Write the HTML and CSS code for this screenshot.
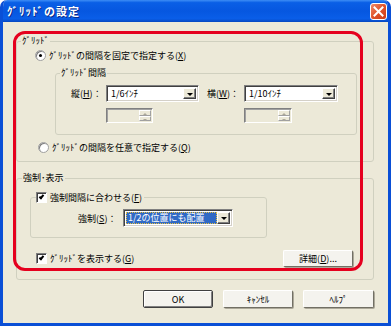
FILE: index.html
```html
<!DOCTYPE html>
<html lang="ja">
<head>
  <meta charset="UTF-8">
  <title>ｸﾞﾘｯﾄﾞの設定</title>
  <link rel="stylesheet" href="styles.css">
</head>
<body>
  <div class="window">
    <div class="titlebar">
      <span class="title">ｸﾞﾘｯﾄﾞの設定</span>
      <span class="close">
        <svg width="11" height="11" viewBox="0 0 11 11"><path d="M1.5 1.5 L9.5 9.5 M9.5 1.5 L1.5 9.5" stroke="#fff" stroke-width="2" stroke-linecap="square"/></svg>
      </span>
    </div>

    <div class="content">
      <fieldset class="group grid-group">
        <legend>ｸﾞﾘｯﾄﾞ</legend>
        <div class="option first">
          <span class="radio checked"></span>
          <span>ｸﾞﾘｯﾄﾞの間隔を固定で指定する(<u>X</u>)</span>
        </div>

        <fieldset class="group spacing">
          <legend>ｸﾞﾘｯﾄﾞ間隔</legend>
          <div class="row">
            <span class="field-label v">縦(<u>H</u>)：</span>
            <span class="combo w93"><span class="combo-text">1/6ｲﾝﾁ</span><span class="arrow"></span></span>
            <span class="field-label h">横(<u>W</u>)：</span>
            <span class="combo w94"><span class="combo-text">1/10ｲﾝﾁ</span><span class="arrow"></span></span>
          </div>
          <div class="row spins">
            <span class="spin"><span class="spin-btns"><span class="up"></span><span class="down"></span></span></span>
            <span class="spin second"><span class="spin-btns"><span class="up"></span><span class="down"></span></span></span>
          </div>
        </fieldset>

        <div class="option last">
          <span class="radio"></span>
          <span>ｸﾞﾘｯﾄﾞの間隔を任意で指定する(<u>Q</u>)</span>
        </div>
      </fieldset>

      <fieldset class="group force-group">
        <legend>強制･表示</legend>
        <fieldset class="group snap">
          <legend><span class="check on"></span><span>強制間隔に合わせる(<u>F</u>)</span></legend>
          <div class="row">
            <span class="field-label force">強制(<u>S</u>)：</span>
            <span class="combo w110 focused"><span class="combo-text"><span class="selected">1/2の位置にも配置</span></span><span class="arrow"></span></span>
          </div>
        </fieldset>
        <div class="show-row">
          <div class="option">
            <span class="check on"></span>
            <span>ｸﾞﾘｯﾄﾞを表示する(<u>G</u>)</span>
          </div>
          <button class="btn detail">詳細(<u>D</u>)...</button>
        </div>
      </fieldset>

      <div class="buttons">
        <button class="btn default">OK</button>
        <button class="btn">ｷｬﾝｾﾙ</button>
        <button class="btn">ﾍﾙﾌﾟ</button>
      </div>
    </div>

    <div class="mark"></div>
  </div>
</body>
</html>
```

FILE: styles.css
```css
*, *::before, *::after { box-sizing: border-box; }
html, body {
  margin: 0; padding: 0;
  background: #fff;
}
.window {
  position: relative;
  width: 391px;
  height: 326px;
  background: #ece9d8;
  border: 3px solid #0a4fd6;
  border-top: none;
  border-radius: 7px 7px 0 0;
  font-family: "Noto Sans CJK JP", sans-serif;
  font-size: 9px;
  color: #000;
  overflow: hidden;
}
.titlebar {
  display: flex;
  align-items: center;
  justify-content: space-between;
  height: 22px;
  margin: 0 -3px;
  padding: 0 4px 0 7px;
  border-radius: 7px 7px 0 0;
  background: linear-gradient(to bottom, #3d8df5 0%, #0a5fe6 12%, #0657e0 50%, #0a5ee8 85%, #0547c0 100%);
}
.title {
  color: #fff;
  font-weight: bold;
  font-size: 11px;
  letter-spacing: 1px;
  text-shadow: 1px 1px 0 #0a2a8a;
}
.close {
  display: flex;
  align-items: center;
  justify-content: center;
  width: 17px;
  height: 17px;
  border: 1px solid #fff;
  border-radius: 3px;
  background: linear-gradient(135deg, #f08a6a 0%, #e0532b 50%, #c93c18 100%);
}
.content {
  padding: 13px 15px 0 13px;
}

/* group boxes */
.group {
  margin: 0;
  padding: 0;
  border: 1px solid #d0d0bf;
  border-radius: 3px;
  min-width: 0;
}
.group legend {
  padding: 0 1px;
  margin-left: 4px;
  line-height: 12px;
}
.grid-group {
  width: 358px;
  padding-bottom: 7px;
}
.option {
  display: flex;
  align-items: center;
  gap: 3px;
  height: 14px;
}
.option.first { margin: 1px 0 0 18px; }
.option.last { margin: 5px 0 0 21px; }
.spacing {
  width: 302px;
  margin: 5px 0 0 38px;
  padding-bottom: 11px;
}
.row {
  display: flex;
  align-items: center;
  margin-top: 6px;
}
.field-label.v { width: 50px; padding-left: 15px; }
.field-label.h { width: 45px; padding-left: 8px; }
.field-label.force { width: 92px; padding-left: 47px; }

/* combo boxes */
.combo {
  display: flex;
  align-items: center;
  height: 17px;
  background: #fff;
  border: 1px solid;
  border-color: #808080 #fff #fff #808080;
  box-shadow: inset 1px 1px 0 #404040, inset -1px -1px 0 #d4d0c8;
  padding: 2px;
}
.w93 { width: 93px; }
.w94 { width: 94px; }
.w110 { width: 110px; height: 18px; }
.combo-text {
  flex: 1;
  padding-left: 2px;
  line-height: 12px;
  white-space: nowrap;
  overflow: hidden;
}
.focused .combo-text { padding-left: 0; }
.selected {
  display: block;
  background: #316ac5;
  color: #fff;
  padding-left: 2px;
  outline: 1px dotted #e8c040;
  outline-offset: -1px;
}
.arrow {
  position: relative;
  width: 13px;
  height: 100%;
  background: #ece9d8;
  border: 1px solid;
  border-color: #fff #404040 #404040 #fff;
  box-shadow: inset -1px -1px 0 #808080;
}
.arrow::after {
  content: "";
  position: absolute;
  left: 3px;
  top: 4px;
  border-left: 3px solid transparent;
  border-right: 3px solid transparent;
  border-top: 3px solid #000;
}

/* disabled spin boxes */
.spin {
  display: flex;
  justify-content: flex-end;
  width: 47px;
  height: 15px;
  margin-left: 50px;
  background: #ece9d8;
  border: 1px solid;
  border-color: #808080 #fff #fff #808080;
  box-shadow: inset 1px 1px 0 #a0a0a0;
  padding: 1px;
}
.spin.second { margin-left: 91px; width: 48px; }
.spin-btns {
  display: flex;
  flex-direction: column;
  width: 12px;
}
.spin-btns span {
  position: relative;
  flex: 1;
  background: #ece9d8;
  border: 1px solid;
  border-color: #fff #a0a0a0 #a0a0a0 #fff;
}
.spin-btns span::after {
  content: "";
  position: absolute;
  left: 3px;
  top: 2px;
  border-left: 2px solid transparent;
  border-right: 2px solid transparent;
}
.spin-btns .up::after { border-bottom: 2px solid #aca899; }
.spin-btns .down::after { border-top: 2px solid #aca899; }

/* radio and check */
.radio {
  width: 11px;
  height: 11px;
  border-radius: 50%;
  background: #fff;
  border: 1px solid #a0a0a0;
  box-shadow: inset 1px 1px 0 #808080;
  display: flex;
  align-items: center;
  justify-content: center;
}
.radio.checked::after {
  content: "";
  width: 3px;
  height: 3px;
  border-radius: 50%;
  background: #000;
}
.check {
  display: inline-block;
  position: relative;
  width: 11px;
  height: 11px;
  background: #fff;
  border: 1px solid;
  border-color: #808080 #fff #fff #808080;
  box-shadow: inset 1px 1px 0 #404040;
  vertical-align: middle;
}
.check.on::after {
  content: "";
  position: absolute;
  left: 3px;
  top: 1px;
  width: 3px;
  height: 5px;
  border: solid #000;
  border-width: 0 2px 2px 0;
  transform: rotate(40deg);
}

.force-group {
  width: 358px;
  margin-top: 10px;
  padding-bottom: 12px;
}
.force-group > legend { margin-left: 5px; }
.snap {
  width: 237px;
  margin: 7px 0 0 13px;
  padding-bottom: 10px;
}
.snap legend {
  display: flex;
  align-items: center;
  gap: 3px;
  margin-left: 5px;
  padding: 0 2px 0 0;
  line-height: 13px;
}
.snap .row { margin-top: 5px; }
.show-row {
  display: flex;
  align-items: center;
  justify-content: space-between;
  margin: 12px 20px 0 19px;
  height: 17px;
}

/* buttons */
.btn {
  height: 17px;
  padding: 0;
  font-family: inherit;
  font-size: 9px;
  background: #f4f3ee;
  border: 1px solid;
  border-color: #fff #716f64 #716f64 #fff;
  box-shadow: 1px 1px 0 #aca899;
  border-radius: 2px;
  color: #000;
}
.detail { width: 70px; }
.buttons {
  display: flex;
  justify-content: flex-end;
  gap: 10px;
  margin-top: 10px;
  margin-right: -1px;
}
.buttons .btn { width: 70px; height: 18px; }
.buttons .btn:last-child { width: 71px; }
.btn.default {
  border-color: #404040;
  box-shadow: inset 1px 1px 0 #fff, inset -1px -1px 0 #808080;
}

/* red annotation over the dialog */
.mark {
  position: absolute;
  left: 10px;
  top: 31px;
  width: 350px;
  height: 240px;
  border: 3px solid #e5001e;
  border-radius: 12px;
}
```
